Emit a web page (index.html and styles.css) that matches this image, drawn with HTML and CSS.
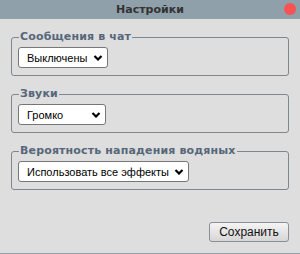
FILE: index.html
```html
<!DOCTYPE html>
<html>
    <head>
        <meta charset="utf-8">
        <link rel="stylesheet" href="styles.css">
    </head>
    <body>
        <div class="dialog">
            <div class="titlebar">
                <span class="title">Настройки</span>
                <span class="close"></span>
            </div>
            <div class="content">
                <fieldset class="group">
                    <legend>Сообщения в чат</legend>
                    <div class="pick pick-chat">
                        <select class="sel">
                            <option>Выключены</option>
                        </select>
                        <svg class="chev" width="10" height="6" viewBox="0 0 10 6"><path d="M1.5 1 L5 4.5 L8.5 1" fill="none" stroke="#000" stroke-width="2.2"/></svg>
                    </div>
                </fieldset>
                <fieldset class="group">
                    <legend>Звуки</legend>
                    <div class="pick pick-sound">
                        <select class="sel">
                            <option>Громко</option>
                        </select>
                        <svg class="chev" width="10" height="6" viewBox="0 0 10 6"><path d="M1.5 1 L5 4.5 L8.5 1" fill="none" stroke="#000" stroke-width="2.2"/></svg>
                    </div>
                </fieldset>
                <fieldset class="group">
                    <legend>Вероятность нападения водяных</legend>
                    <div class="pick pick-fx">
                        <select class="sel">
                            <option>Использовать все эффекты</option>
                        </select>
                        <svg class="chev" width="10" height="6" viewBox="0 0 10 6"><path d="M1.5 1 L5 4.5 L8.5 1" fill="none" stroke="#000" stroke-width="2.2"/></svg>
                    </div>
                </fieldset>
            </div>
            <div class="footer">
                <button class="save">Сохранить</button>
            </div>
        </div>
    </body>
</html>
```
FILE: styles.css
```css
html,
body {
    margin: 0;
    padding: 0;
}

.dialog {
    width: 300px;
    height: 254px;
    box-sizing: border-box;
    background: #dedede;
    border-bottom: 1px solid #8fa0ab;
    display: flex;
    flex-direction: column;
}

.titlebar {
    height: 19px;
    background: #8fa0ab;
    position: relative;
    display: flex;
    align-items: center;
    justify-content: center;
}

.title {
    font-family: "DejaVu Sans", sans-serif;
    font-weight: bold;
    font-size: 11px;
    color: #333;
}

.close {
    position: absolute;
    right: 4px;
    top: 3px;
    width: 12px;
    height: 12px;
    border-radius: 50%;
    background: #fa5252;
}

.content {
    padding: 10px 11px 0 11px;
    display: flex;
    flex-direction: column;
    gap: 10px;
}

.group {
    margin: 0;
    padding: 2px 6px 7px 6px;
    border: 1px solid #7c878f;
    border-radius: 3px;
}

.group legend {
    padding: 0 1px;
    margin-left: 1px;
    font-family: "DejaVu Sans", sans-serif;
    font-weight: bold;
    font-size: 11px;
    letter-spacing: 0.15px;
    line-height: 16px;
    color: #56677a;
}

.pick {
    position: relative;
    height: 21px;
}

.pick-chat {
    width: 90px;
}

.pick-sound {
    width: 88px;
}

.pick-fx {
    width: 171px;
}

.sel {
    appearance: none;
    -webkit-appearance: none;
    display: block;
    width: 100%;
    height: 21px;
    margin: 0;
    padding: 0 0 0 8px;
    font-family: "Liberation Sans", Arial, sans-serif;
    font-size: 11px;
    color: #000;
    background: #fff;
    border: 1px solid #767676;
    border-radius: 3px;
}

.chev {
    position: absolute;
    right: 5px;
    top: 8px;
    pointer-events: none;
}

.footer {
    margin-top: auto;
    padding: 0 11px 11px 0;
    display: flex;
    justify-content: flex-end;
}

.save {
    width: 80px;
    height: 20px;
    padding: 0;
    font-family: "Liberation Sans", Arial, sans-serif;
    font-size: 12px;
    color: #111;
    border: 1px solid #8a8f94;
    border-radius: 3px;
    background: linear-gradient(#f4f4f4, #d6d6d6);
}
```
